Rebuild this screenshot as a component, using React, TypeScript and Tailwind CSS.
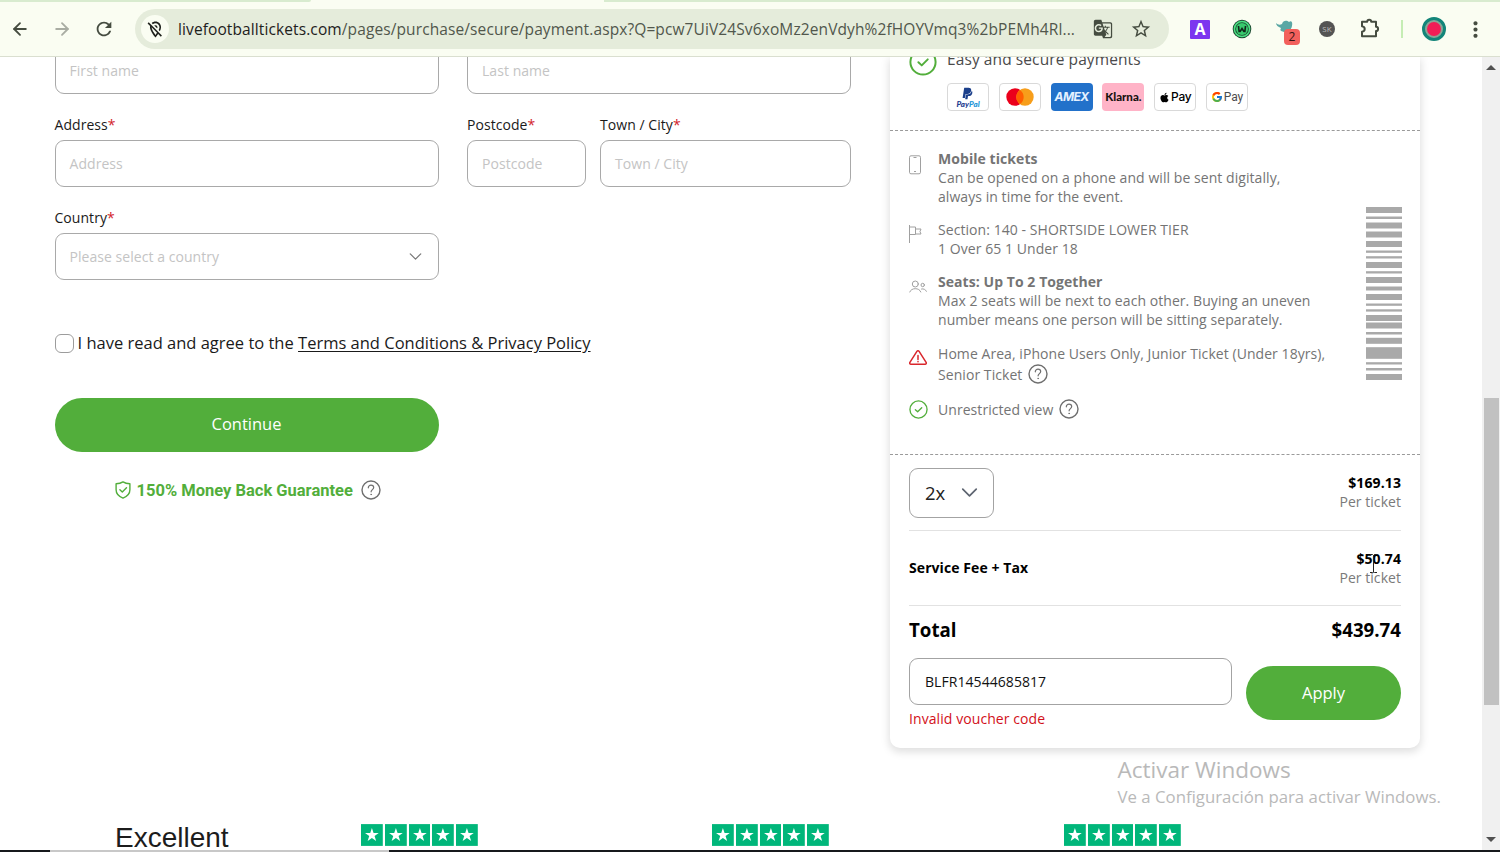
import type { ReactNode } from "react"
import { ArrowLeft, ArrowRight, ChevronDown } from "lucide-react"
import { FaApple, FaPaypal } from "react-icons/fa"
import { FcGoogle } from "react-icons/fc"
import { MdGTranslate, MdMoreVert, MdOutlineLocationOff, MdRefresh, MdStarBorder } from "react-icons/md"

// [top, height] of every stripe in the ticket barcode
const stripes = [
[0, 6], [9.5, 2.5], [15.5, 6], [24.5, 6], [34, 6], [43.5, 2.3], [49.2, 2.3], [55, 6], [64.2, 2.3], [70, 6], [79.5, 4],
[87, 6], [96.5, 2.3], [102.3, 2.3], [108, 6], [115.5, 6], [125, 2.5], [130.8, 6], [140.2, 11.6], [155.2, 2.3], [161, 2.5], [167, 6],
]

function Help() {
return (
<svg viewBox="0 0 20 20" className="h-5 w-5 shrink-0" fill="none" stroke="#6f6f6f" strokeLinecap="round">
<circle cx="10" cy="10" r="9" strokeWidth="1.4" />
<path d="M7.3 7.8c0-1.7 1.2-2.7 2.7-2.7s2.7 1 2.7 2.5c0 2-2.6 2.1-2.6 4.2" strokeWidth="1.2" />
<circle cx="10.1" cy="14.4" r=".45" strokeWidth=".7" fill="#6f6f6f" />
</svg>
)
}

function CheckCircle({ className }: { className: string }) {
return (
<svg viewBox="0 0 20 20" className={className} fill="none" stroke="#52ae3b" strokeWidth="1.4" strokeLinecap="round" strokeLinejoin="round">
<circle cx="10" cy="10" r="9" />
<path d="M6.7 10.2l2.4 2.2 4.3-4.3" />
</svg>
)
}

function Field({ label, placeholder, width, select }: { label?: string; placeholder: string; width: string; select?: boolean }) {
return (
<div className={width}>
{label && (
<div className="h-[25px] text-[14px] leading-[19px] tracking-[0.05px] text-[#1a1a1a]">
{label}<span className="text-[#d2232a]">*</span>
</div>
)}
<div className="flex h-[47px] items-center justify-between rounded-[9px] border border-[#a9a9a9] pr-[12px] pb-px pl-[14px] text-[14px] tracking-[0.05px] text-[#c4c4c4]">
{placeholder}
{select && <ChevronDown size={21} strokeWidth={1.4} color="#777" />}
</div>
</div>
)
}

function Badge({ children, className = "border border-[#d9d9d9] bg-white" }: { children: ReactNode; className?: string }) {
return (
<div className={`flex h-[28px] w-[42px] items-center justify-center rounded-[4px] ${className}`}>
{children}
</div>
)
}

function Price({ value }: { value: string }) {
return (
<div className="-mt-px text-right text-[14px] leading-[19px]">
<div className="font-bold tracking-[0.1px] text-black">{value}</div>
<div className="tracking-[0.05px] text-[#7a7a7a]">Per ticket</div>
</div>
)
}

function Stars() {
return (
<div className="flex gap-[2px]">
{[1, 2, 3, 4, 5].map((n) => (
<svg key={n} viewBox="0 0 22 22" className="h-[22px] w-[21.8px]">
<rect width="22" height="22" fill="#00b67a" />
<path d="M11 4l1.7 5h5.2l-4.2 3.1 1.6 5-4.3-3.1-4.3 3.1 1.6-5L4.1 9h5.2z" fill="#fff" />
</svg>
))}
</div>
)
}

function BrowserBar() {
return (
<header className="h-[57px] border-b border-[#dadfd0] bg-[#fafdf2]">
<div className="flex h-[2px]">
<div className="w-[311px] rounded-br bg-[#d8ebcf]" />
<div className="w-[293px]" />
<div className="flex-1 bg-[#d8ebcf]" />
</div>
<div className="flex h-[54px] items-center text-[#454c40]">
<ArrowLeft size={20} strokeWidth={2.2} className="ml-[10px]" />
<ArrowRight size={20} strokeWidth={2.2} className="ml-[22px] text-[#a9ada3]" />
<MdRefresh size={22} className="ml-[21px]" />
<div className="ml-[20px] flex h-[40px] w-[1034px] items-center rounded-full bg-[#e5ecdb]">
<div className="ml-[6px] flex h-[28px] w-[28px] items-center justify-center rounded-full bg-[#fafdf2] text-[#1e211c]">
<MdOutlineLocationOff size={19} />
</div>
<div className="mt-px ml-[9px] w-[900px] text-[15.5px] tracking-[0.105px] whitespace-nowrap text-[#51574c]">
<span className="text-[#1e211c]">livefootballtickets.com</span>/pages/purchase/secure/payment.aspx?Q=pcw7UiV24Sv6xoMz2enVdyh%2fHOYVmq3%2bPEMh4Rl...
</div>
<MdGTranslate size={20} className="ml-[15px]" />
<MdStarBorder size={22} className="ml-[17px]" />
</div>
<div className="ml-[21px] flex h-[19px] w-[20px] items-center justify-center rounded-[1px] bg-[#7c35ef] text-[16px] leading-none font-bold text-white">A</div>
<svg viewBox="0 0 20 20" className="ml-[22px] h-5 w-5">
<circle cx="10" cy="10" r="9.3" fill="#1d4a32" />
<circle cx="10" cy="10" r="7.6" fill="none" stroke="#4be083" strokeWidth="1.5" />
<circle cx="10" cy="10" r="6" fill="#38c96d" />
<path d="M6.5 7l.6 5.5h1L10 9.5l1.9 3h1l.6-5.5" fill="none" stroke="#10251a" strokeWidth="1.6" />
</svg>
<div className="relative ml-[23px] h-[24px] w-[26px]">
<svg viewBox="0 0 26 24" className="h-[24px] w-[26px]">
<path d="M1 6c2 2 4 2 6 1 1-4 5-4 7-2 2-2 4 0 3 4-1 5-5 6-8 6-4-1-4-2-3-4-3-1-5-3-5-5z" fill="#5aa7a4" />
</svg>
<div className="absolute top-[12px] left-[9px] flex h-[16px] w-[16px] items-center justify-center rounded-[4px] bg-[#f2605c] text-[12px] text-[#351313]">2</div>
</div>
<div className="ml-[18px] flex h-4 w-4 items-center justify-center rounded-full bg-[#545454] text-[8px] text-[#bbb]">SK</div>
<svg viewBox="0 0 22 22" className="ml-[24px] h-[22px] w-[22px]" fill="none" stroke="#454c40" strokeWidth="2" strokeLinejoin="round">
<path d="M3 3.800h5.200a2 2 0 0 1 4 0h4.800v5a2 2 0 0 1 0 4.200v5.200H3v-4.500c3.600-.5 3.600-5 0-5.500z" />
</svg>
<div className="ml-[20px] h-[18px] w-[2px] bg-[#c5edb4]" />
<div className="ml-[19px] h-6 w-6 rounded-full border-[3px] border-[#128579] bg-[#8aa596] p-[2px]">
<div className="h-full w-full rounded-full bg-[#f21d56]" />
</div>
<MdMoreVert size={25} className="ml-[17px]" />
</div>
</header>
)
}

function CheckoutForm() {
return (
<div className="ml-[54.5px] w-[797px]">
<div className="-mt-[10px] flex gap-[28.5px]">
<Field placeholder="First name" width="w-[384px]" />
<Field placeholder="Last name" width="w-[384px]" />
</div>
<div className="mt-[21px] flex">
<Field label="Address" placeholder="Address" width="w-[384px]" />
<Field label="Postcode" placeholder="Postcode" width="ml-[28.5px] w-[119px]" />
<Field label="Town / City" placeholder="Town / City" width="ml-[14px] w-[251px]" />
</div>
<div className="mt-[21px]">
<Field label="Country" placeholder="Please select a country" width="w-[384px]" select />
</div>

<div className="mt-[51px] flex h-[24px] items-center text-[16.5px] text-[#1a1a1a]">
<div className="mr-[4px] h-[19px] w-[19px] rounded-[6px] border border-[#9c9c9c]" />
<span className="whitespace-pre">I have read and agree to the </span>
<a className="underline underline-offset-2">Terms and Conditions &amp; Privacy Policy</a>
</div>

<button className="mt-[43px] h-[54px] w-[384px] rounded-full bg-[#52ae3b] pb-px text-[16.5px] text-white">Continue</button>

<div className="mt-[28px] flex h-[20px] w-[384px] items-center pl-[60px] text-[#52ae3b]">
<svg viewBox="0 0 16 18" className="h-[18px] w-4" fill="none" stroke="#52ae3b" strokeWidth="1.4" strokeLinecap="round" strokeLinejoin="round">
<path d="M8 .9c2 1.4 4.3 1.9 6.9 1.9v6c0 4-2.7 6.7-6.9 8.3C3.8 15.5 1.1 12.8 1.1 8.8v-6C3.7 2.8 6 2.3 8 .9z" />
<path d="M4.9 8.7L7.3 11l4.2-4.300" />
</svg>
<span className="mt-[3px] mr-[8px] ml-[6px] font-[Roboto,sans-serif] text-[16.5px] font-bold">150% Money Back Guarantee</span>
<Help />
</div>
</div>
)
}

function TicketCard() {
return (
<aside className="ml-[38.5px] h-[691px] w-[530px] shrink-0 rounded-b-[10px] bg-white shadow-[0_3px_9px_1px_rgba(0,0,0,0.13)]">
<div className="flex h-[74px] flex-col border-b border-dashed border-[#9a9a9a] pl-[19px]">
<div className="-mt-[9px] flex items-center">
<CheckCircle className="h-[28px] w-[28px]" />
<span className="-mt-[5px] ml-[10px] text-[15.5px] tracking-[0.09px] text-[#4a4a4a]">Easy and secure payments</span>
</div>
<div className="mt-[7px] ml-[38px] flex gap-[9.8px]">
<Badge>
<div className="flex flex-col items-center">
<FaPaypal size={13} color="#1b3f8b" />
<span className="font-[Lato,sans-serif] text-[8px] leading-[8px] font-black text-[#1f3d8f] italic">Pay<span className="text-[#2596d8]">Pal</span></span>
</div>
</Badge>
<Badge>
<svg viewBox="0 0 28 18" className="h-[18px] w-[28px]">
<circle cx="9" cy="9" r="8.7" fill="#eb001b" />
<circle cx="19" cy="9" r="8.7" fill="#f79e1b" />
<path d="M14 1.9a8.7 8.7 0 0 1 0 14.2 8.7 8.7 0 0 1 0-14.2z" fill="#ff5f00" />
</svg>
</Badge>
<Badge className="bg-[#2271ca]">
<span className="font-[Inter,sans-serif] text-[12px] font-bold tracking-[-0.6px] text-[#e4f0ff] italic">AMEX</span>
</Badge>
<Badge className="bg-[#ffb3c7]">
<span className="font-[Lato,sans-serif] text-[11.5px] font-black text-[#17120f]">Klarna.</span>
</Badge>
<Badge>
<FaApple size={11} color="#000" />
<span className="ml-px font-[Inter,sans-serif] text-[12px] font-medium tracking-[-0.3px] text-black">Pay</span>
</Badge>
<Badge>
<FcGoogle size={12} />
<span className="ml-px font-[Roboto,sans-serif] text-[12px] text-[#4d4d4d]">Pay</span>
</Badge>
</div>
</div>

<div className="flex h-[324px] justify-between border-b border-dashed border-[#9a9a9a] pt-[18px] pr-[18.5px] pl-[19px] text-[14px] leading-[19px] tracking-[0.06px] text-[#747474]">
<div>
<div className="flex">
<svg viewBox="0 0 12 20" className="mt-[6px] mr-[17px] h-5 w-3" fill="none" stroke="#a0a0a0">
<rect x=".5" y=".8" width="11" height="18" rx="1.5" />
<path d="M4.5 2.5h3M5 16.5h2" />
</svg>
<div>
<div className="font-bold">Mobile tickets</div>
<div>Can be opened on a phone and will be sent digitally,</div>
<div>always in time for the event.</div>
</div>
</div>
<div className="mt-[14px] flex">
<svg viewBox="0 0 13 18" className="mt-[5px] mr-[16px] h-[18px] w-[13px]" fill="none" stroke="#a0a0a0">
<path d="M.5 0v18M.5 2h6v7.500H.5M6.500 4h5.500l-1 2.500 1 2.500H6.500" />
</svg>
<div>
<div>Section: 140 - SHORTSIDE LOWER TIER</div>
<div>1 Over 65 1 Under 18</div>
</div>
</div>
<div className="mt-[14px] flex">
<svg viewBox="0 0 18 13" className="mt-[8px] mr-[11px] h-[13px] w-[18px]" fill="none" stroke="#a0a0a0" strokeLinecap="round">
<circle cx="6.3" cy="4" r="3" />
<circle cx="13.7" cy="5" r="1.7" />
<path d="M.8 12c.8-2.300 3-3.300 5.500-3.300s4.700 1 5.500 3.300M12.500 9c2-.5 4 .3 4.900 2.300" />
</svg>
<div>
<div className="font-bold">Seats: Up To 2 Together</div>
<div>Max 2 seats will be next to each other. Buying an uneven</div>
<div>number means one person will be sitting separately.</div>
</div>
</div>
<div className="mt-[15px] flex">
<svg viewBox="0 0 18 15" className="mt-[6px] mr-[11px] h-[15px] w-[18px]" fill="none" stroke="#d9262c" strokeWidth="1.5" strokeLinejoin="round" strokeLinecap="round">
<path d="M7.9 1.4L.9 12.300c-.5.9 0 1.900 1 1.900h14.200c1 0 1.500-1 1-1.900l-7-10.900c-.5-.8-1.700-.8-2.200 0z" />
<path d="M9 5.500v4M9 11.500v.2" />
</svg>
<div>
<div>Home Area, iPhone Users Only, Junior Ticket (Under 18yrs),</div>
<div className="mt-px flex items-center gap-[6px]">Senior Ticket <Help /></div>
</div>
</div>
<div className="mt-[15px] flex items-center">
<CheckCircle className="mr-[10px] h-[19px] w-[19px]" />
<span className="mr-[6px]">Unrestricted view</span>
<Help />
</div>
</div>
<svg viewBox="0 0 36 173" className="mt-[57.5px] h-[173px] w-[36px] shrink-0" fill="#a9a9a9">
{stripes.map(([y, h]) => <rect key={y} y={y} width="36" height={h} />)}
</svg>
</div>

<div className="px-[19px]">
<div className="flex h-[76px] items-center justify-between border-b border-[#e2e2e2]">
<div className="flex h-[50px] w-[85px] items-center justify-between rounded-[9px] border border-[#a3a3a3] pr-[10px] pl-[15px] text-[18.5px] text-[#222]">
2x
<ChevronDown size={27} strokeWidth={1.5} color="#5d6470" />
</div>
<Price value="$169.13" />
</div>
<div className="flex h-[75px] items-center justify-between border-b border-[#e2e2e2]">
<div className="-mt-[2px] text-[14px] font-bold tracking-[0.08px] text-black">Service Fee + Tax</div>
<Price value="$50.74" />
</div>
<div className="flex h-[52px] items-center justify-between pb-[4px] text-[18.7px] font-bold text-black">
<span>Total</span>
<span>$439.74</span>
</div>
<div className="flex justify-between">
<div>
<div className="flex h-[47px] w-[323px] items-center rounded-[9px] border border-[#a3a3a3] pl-[15px] text-[14px] tracking-[0.06px] text-[#111]">BLFR14544685817</div>
<div className="mt-[4px] text-[14px] leading-[19px] tracking-[0.08px] text-[#d2101a]">Invalid voucher code</div>
</div>
<button className="mt-[8px] h-[54px] w-[155px] rounded-full bg-[#52ae3b] text-[16.5px] text-white">Apply</button>
</div>
</div>
</aside>
)
}

export default function App() {
return (
<div className="relative flex h-[852px] w-[1500px] flex-col overflow-hidden bg-white font-['Open_Sans','Noto_Sans',sans-serif]">
<BrowserBar />

<div className="flex h-[793px] justify-between overflow-hidden">
<main>
<div className="flex h-[767px]">
<CheckoutForm />
<TicketCard />
</div>
<div className="flex items-start">
<div className="-mt-[7px] ml-[115px] w-[246px] font-['Liberation_Sans',Arial,sans-serif] text-[28px] text-[#1c1c1c]">Excellent</div>
<Stars />
<div className="ml-[234px]"><Stars /></div>
<div className="ml-[235px]"><Stars /></div>
</div>
</main>

{/* scrollbar */}
<div className="flex w-[18px] flex-col items-center bg-[#f0f0f0]">
<div className="mt-[8px] h-0 w-0 border-x-[5px] border-b-[5px] border-x-transparent border-b-[#505050]" />
<div className="mt-[328px] h-[307px] w-[15px] bg-[#c1c1c1]" />
<div className="mt-[132px] h-0 w-0 border-x-[5px] border-t-[5px] border-x-transparent border-t-[#505050]" />
</div>
</div>

{/* top edge of the taskbar */}
<div className="flex h-[2px] bg-[#17191c]">
<div className="ml-[50px] w-[339px] bg-[#c8c8c8]" />
</div>

<div className="absolute top-[754px] left-[1117.5px] whitespace-nowrap text-[#b9b9b9]">
<div className="text-[22.5px] leading-[32px]">Activar Windows</div>
<div className="text-[16.8px] leading-[22px]">Ve a Configuración para activar Windows.</div>
</div>

{/* text cursor over the fee */}
<svg viewBox="0 0 9 20" className="absolute top-[554px] left-[1369px] h-[20px] w-[9px]" fill="none" stroke="#222">
<path d="M1 .5h2.500l1 1 1-1H8M4.500 1.500v17M1 18.500h2.500l1-.5 1 .5H8" />
</svg>
</div>
)
}
